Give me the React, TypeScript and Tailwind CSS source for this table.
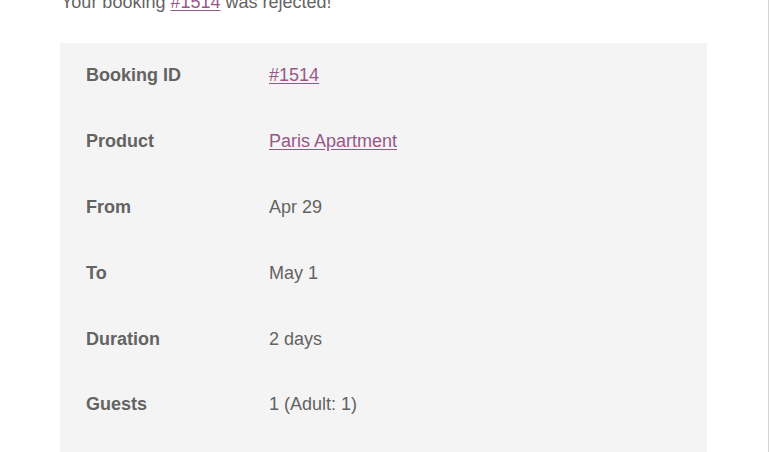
const rows: { label: string; value: string; link?: boolean }[] = [
  { label: 'Booking ID', value: '#1514', link: true },
  { label: 'Product', value: 'Paris Apartment', link: true },
  { label: 'From', value: 'Apr 29' },
  { label: 'To', value: 'May 1' },
  { label: 'Duration', value: '2 days' },
  { label: 'Guests', value: '1 (Adult: 1)' },
];

export default function App() {
  return (
    <div className="h-[452px] w-[769px] overflow-hidden bg-white font-['Liberation_Sans',Arial,sans-serif] text-[18px] leading-[27px] text-[#636363] border-r border-[#d4d4d4]">
      <div className="pl-[61px] pr-[61px]">
        <p className="-mt-[11px]">
          Your booking <a className="text-[#96588a] underline underline-offset-2">#1514</a> was rejected!
        </p>

        <div className="mt-[27px] w-[647px] -ml-px bg-[#f4f4f4] pb-[40px]">
          {rows.map((row) => (
            <div key={row.label} className="flex h-[65.8px] items-center">
              <div className="w-[209px] pl-[26px] font-bold">{row.label}</div>
              <div>
                {row.link ? (
                  <a className="text-[#96588a] underline underline-offset-2">{row.value}</a>
                ) : (
                  row.value
                )}
              </div>
            </div>
          ))}
        </div>
      </div>
    </div>
  );
}
